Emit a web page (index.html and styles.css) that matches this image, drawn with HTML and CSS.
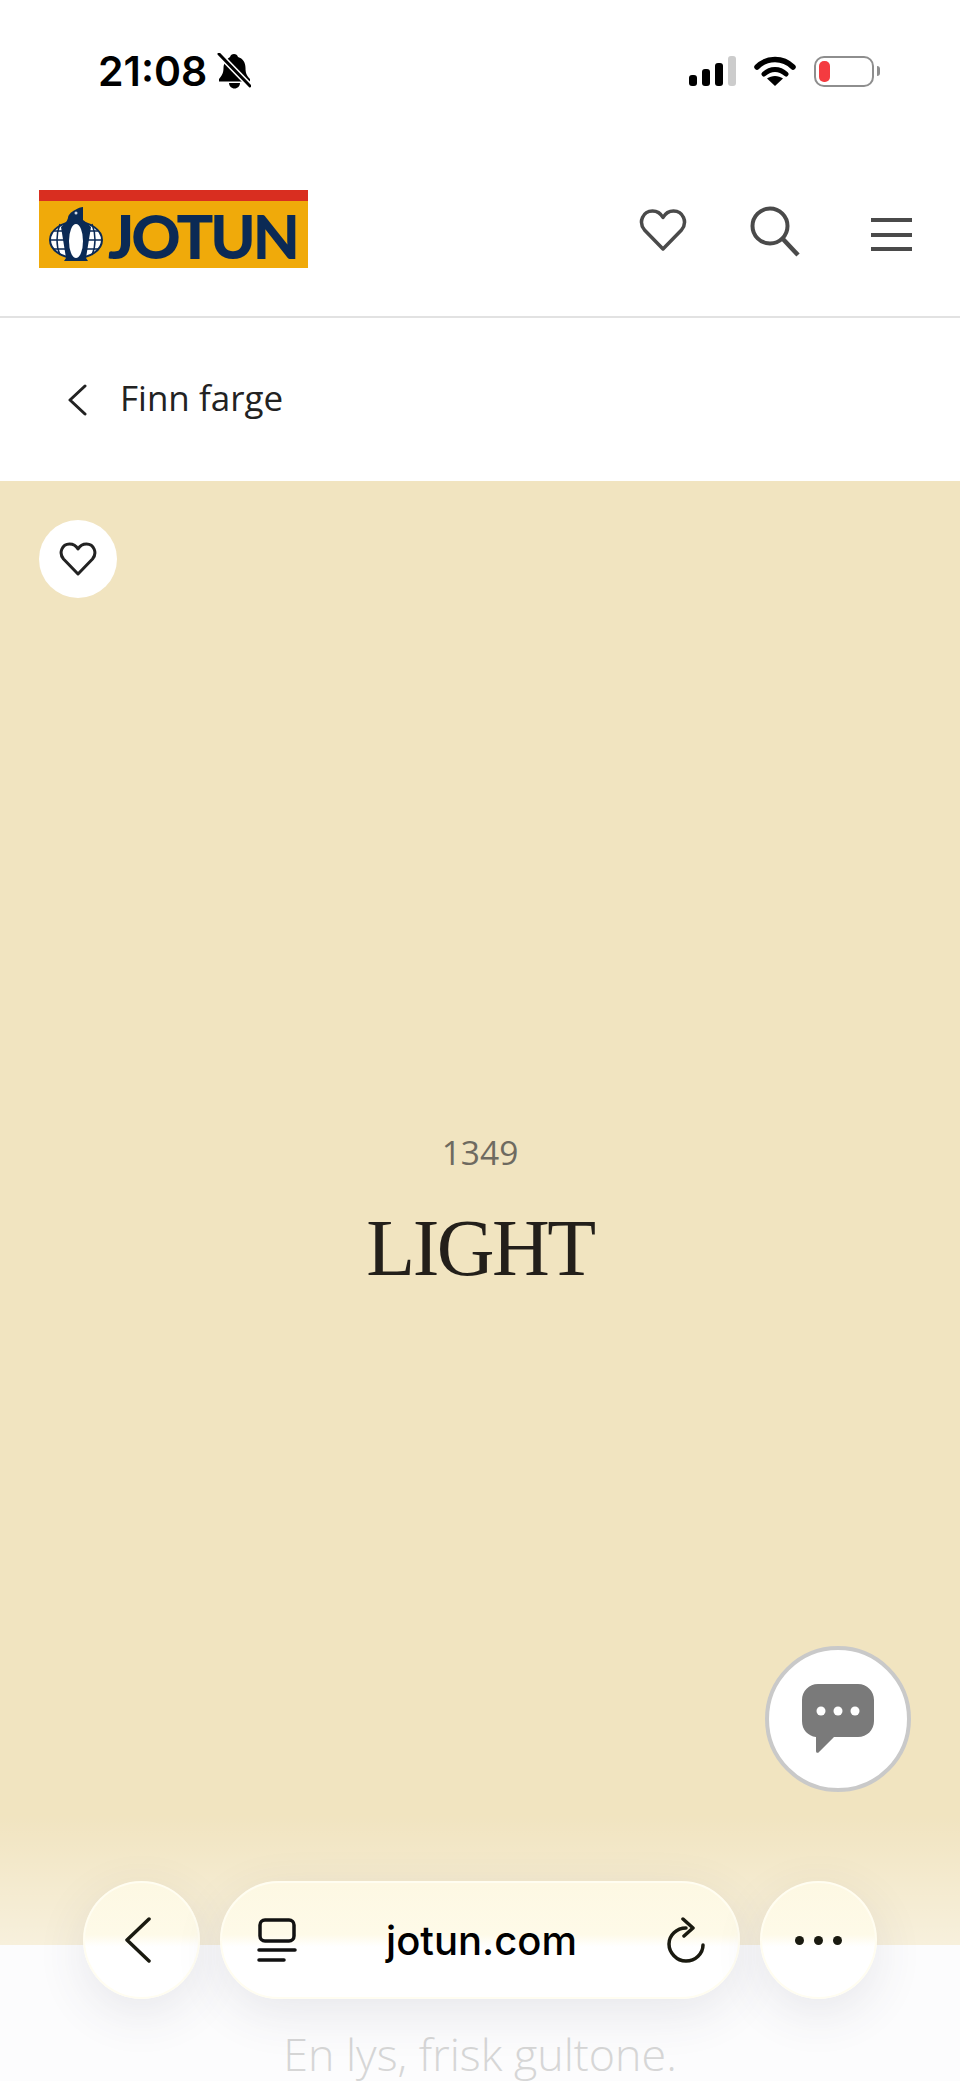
FILE: index.html
```html
<!DOCTYPE html>
<html lang="no">
<head>
  <meta charset="UTF-8">
  <title>1349 Light - Jotun</title>
  <link rel="stylesheet" href="styles.css">
</head>
<body>
<div class="page">

  <div class="statusbar">
    <div class="status-left">
      <span class="time">21:08</span>
      <svg class="bell" width="34" height="36" viewBox="0 0 34 36">
        <path d="M17 1c2 0 3.500 1.200 4 3 5 1.500 7.500 5.500 7.500 11 0 5 1 7.500 4.500 11v2.500H2V26c3-3.500 4.500-6 4.500-11 0-5.500 4-9.500 6.500-11 .5-1.800 2-3 4-3z" fill="#000"/>
        <path d="M12 30h11c0 3-2.500 5.500-5.500 5.500S12 33 12 30z" fill="#000"/>
        <path d="M1 0l32 33" stroke="#fff" stroke-width="6"/>
        <path d="M2 1l31 32" stroke="#000" stroke-width="3" stroke-linecap="round"/>
      </svg>
    </div>
    <div class="status-right">
      <div class="signal">
        <i class="bar bar1"></i><i class="bar bar2"></i><i class="bar bar3"></i><i class="bar bar4"></i>
      </div>
      <svg width="42" height="31" viewBox="0 0 42 31">
        <path d="M3 11C13 1 29 1 39 11" fill="none" stroke="#000" stroke-width="5.500" stroke-linecap="round"/>
        <path d="M10 18c6.500-6 15.500-6 22 0" fill="none" stroke="#000" stroke-width="5" stroke-linecap="round"/>
        <path d="M21 30l-8-7.500c4.500-3.500 11.500-3.500 16 0z" fill="#000"/>
      </svg>
      <div class="battery"><i class="battery-level"></i></div>
    </div>
  </div>

  <header class="site-header">
    <div class="logo">
      <div class="logo-band"></div>
      <div class="logo-body">
        <svg width="54" height="54" viewBox="0 0 54 54">
          <ellipse cx="27" cy="33" rx="26" ry="18" fill="#fff" stroke="#0b2a55" stroke-width="2"/>
          <path d="M2 33h50M5 24h44M5 42h44" stroke="#0b2a55" stroke-width="1.500"/>
          <path d="M11 17c-4 10-4 22 0 31M43 17c4 10 4 22 0 31" fill="none" stroke="#0b2a55" stroke-width="1.500"/>
          <path d="M26 3c3-2 6-3 8-3v13c3 2 5 4 8 7l-5 31 2 3H15l2-3-5-31c3-3 6-5 7-9 0-3 3-6 7-8z" fill="#0b2a55"/>
          <ellipse cx="27" cy="34" rx="7" ry="17" fill="#fff"/>
          <circle cx="27" cy="6" r="1.500" fill="#cfd8e6"/>
        </svg>
        <span class="logo-text">JOTUN</span>
      </div>
    </div>
    <nav class="header-icons">
      <svg class="icon-heart" width="48" height="44" viewBox="0 0 48 44">
        <path d="M24 41L5.500 22C-1 14 4 3 13.500 3c4.500 0 8 2 10.500 6.500C26.500 5 30 3 34.500 3 44 3 49 14 42.500 22z" fill="none" stroke="#4a4a4a" stroke-width="3.500" stroke-linejoin="round"/>
      </svg>
      <svg class="icon-search" width="52" height="52" viewBox="0 0 52 52">
        <circle cx="21" cy="20" r="17.500" fill="none" stroke="#4a4a4a" stroke-width="4"/>
        <path d="M33 32l16 17" stroke="#4a4a4a" stroke-width="4.500"/>
      </svg>
      <div class="burger"><i></i><i></i><i></i></div>
    </nav>
  </header>

  <div class="crumb">
    <svg width="20" height="32" viewBox="0 0 20 32">
      <path d="M18 2L3 16l15 14" fill="none" stroke="#222" stroke-width="3" stroke-linecap="round" stroke-linejoin="round"/>
    </svg>
    <span class="crumb-text">Finn farge</span>
  </div>

  <section class="swatch">
    <button class="fav">
      <svg width="38" height="34" viewBox="0 0 38 34">
        <path d="M19 32L4.500 17C-.5 11 3 2 10.500 2c3.500 0 6.500 1.500 8.500 5 2-3.500 5-5 8.500-5C35 2 38.500 11 33.500 17z" fill="none" stroke="#222" stroke-width="3" stroke-linejoin="round"/>
      </svg>
    </button>
    <div class="color-code">1349</div>
    <h1 class="color-name">LIGHT</h1>
    <button class="chat">
      <svg width="74" height="72" viewBox="0 0 74 72">
        <path d="M17 1h40c9 0 16 7 16 16v21c0 9-7 16-16 16H33L18 69c-1 1.500-3 1-3-1V54C7 53 1 47 1 38V17C1 8 8 1 17 1z" fill="#7a7a7a"/>
        <circle cx="20" cy="28" r="4.500" fill="#fff"/>
        <circle cx="37" cy="28" r="4.500" fill="#fff"/>
        <circle cx="54" cy="28" r="4.500" fill="#fff"/>
      </svg>
    </button>
    <div class="swatch-fade"></div>
  </section>

  <section class="description">
    <p class="desc-text">En lys, frisk gultone.</p>
  </section>

  <div class="browser-bar">
    <button class="bar-round back-btn">
      <svg width="28" height="46" viewBox="0 0 28 46">
        <path d="M25 2L3 23l22 21" fill="none" stroke="#1a1a10" stroke-width="3.500" stroke-linecap="round" stroke-linejoin="round"/>
      </svg>
    </button>
    <div class="bar-pill">
      <svg width="40" height="46" viewBox="0 0 40 46">
        <rect x="3" y="3" width="34" height="21" rx="5" fill="none" stroke="#111" stroke-width="3.500"/>
        <path d="M2 33h36M2 43h25" stroke="#111" stroke-width="3.500" stroke-linecap="round"/>
      </svg>
      <span class="bar-url">jotun.com</span>
      <svg width="40" height="46" viewBox="0 0 40 46">
        <path d="M20 11C10.500 11 3 18.500 3 27s7.500 17 17 17 17-7.500 17-16" fill="none" stroke="#1a1a10" stroke-width="3.500" stroke-linecap="round"/>
        <path d="M17 2l10 9-9 8" fill="none" stroke="#1a1a10" stroke-width="3.500" stroke-linecap="round" stroke-linejoin="round"/>
      </svg>
    </div>
    <button class="bar-round">
      <i class="dot"></i><i class="dot"></i><i class="dot"></i>
    </button>
  </div>

</div>
</body>
</html>
```

FILE: styles.css
```css
html, body {
  margin: 0;
  padding: 0;
  background: #fff;
}
.page {
  position: relative;
  width: 960px;
  height: 2081px;
  overflow: hidden;
  font-family: "Open Sans", sans-serif;
}
button {
  border: none;
  padding: 0;
}
svg {
  display: block;
}

/* status bar */
.statusbar {
  display: flex;
  justify-content: space-between;
  align-items: center;
  box-sizing: border-box;
  height: 190px;
  padding: 0 86px 48px 98px;
}
.status-left {
  display: flex;
  align-items: center;
  gap: 10px;
}
.time {
  font-family: Inter, sans-serif;
  font-weight: 600;
  font-size: 41px;
  line-height: 44px;
  color: #000;
}
.status-right {
  display: flex;
  align-items: center;
  gap: 18px;
}
.signal {
  display: flex;
  align-items: flex-end;
  gap: 5px;
  height: 30px;
}
.bar {
  display: block;
  width: 8px;
  border-radius: 3px;
  background: #000;
}
.bar1 { height: 11px; }
.bar2 { height: 17px; }
.bar3 { height: 23px; }
.bar4 { height: 30px; background: #ccc; }
.battery {
  position: relative;
  width: 60px;
  height: 31px;
  box-sizing: border-box;
  border: 2.5px solid #8e8e8e;
  border-radius: 10px;
  padding: 3px;
}
.battery::after {
  content: "";
  position: absolute;
  right: -8px;
  top: 8px;
  width: 3px;
  height: 10px;
  background: #8e8e8e;
  border-radius: 0 3px 3px 0;
}
.battery-level {
  display: block;
  width: 11px;
  height: 100%;
  background: #f43b40;
  border-radius: 5px;
}

/* header */
.site-header {
  display: flex;
  justify-content: space-between;
  align-items: flex-start;
  height: 126px;
  padding: 0 48px 0 39px;
  border-bottom: 2px solid #e2e2e2;
}
.logo {
  width: 269px;
  height: 78px;
  background: #f0aa0a;
}
.logo-band {
  height: 11px;
  background: #d92e20;
}
.logo-body {
  display: flex;
  align-items: flex-start;
  gap: 5px;
  padding: 6px 0 0 10px;
}
.logo-text {
  font-family: Lato, sans-serif;
  font-weight: 900;
  font-size: 61px;
  line-height: 58px;
  letter-spacing: -3px;
  color: #0b2a55;
}
.header-icons {
  display: flex;
  align-items: flex-start;
  padding-top: 16px;
}
.icon-heart {
  margin-top: 2px;
  margin-right: 62px;
}
.icon-search {
  margin-right: 70px;
}
.burger {
  display: flex;
  flex-direction: column;
  gap: 10.500px;
  width: 41px;
  margin-top: 12px;
}
.burger i {
  display: block;
  height: 4px;
  background: #4a4a4a;
}

/* back link */
.crumb {
  display: flex;
  align-items: center;
  gap: 33px;
  height: 163px;
  padding-left: 67px;
}
.crumb-text {
  margin-top: -5px;
  font-size: 35px;
  color: #222;
}

/* colour area */
.swatch {
  position: relative;
  display: flex;
  flex-direction: column;
  align-items: center;
  justify-content: center;
  height: 1464px;
  background: #f1e4c0;
}
.fav {
  position: absolute;
  left: 39px;
  top: 39px;
  display: flex;
  align-items: center;
  justify-content: center;
  width: 78px;
  height: 78px;
  border-radius: 50%;
  background: #fff;
}
.color-code {
  font-size: 33.500px;
  line-height: 44px;
  color: #6e6a60;
}
.color-name {
  margin: 26px 0 0;
  font-family: "Liberation Serif", serif;
  font-weight: 400;
  font-size: 80px;
  line-height: 96px;
  letter-spacing: -2.500px;
  color: #231f1a;
}
.chat {
  position: absolute;
  left: 765px;
  top: 1165px;
  display: flex;
  align-items: center;
  justify-content: center;
  box-sizing: border-box;
  width: 146px;
  height: 146px;
  border: 4px solid #c9c9c9;
  border-radius: 50%;
  background: #fff;
}
.swatch-fade {
  position: absolute;
  left: 0;
  right: 0;
  bottom: 0;
  height: 130px;
  background: linear-gradient(rgba(255, 255, 255, 0), rgba(255, 255, 255, 0.45));
}

/* text under the colour */
.description {
  height: 136px;
  background: #fcfcfd;
}
.desc-text {
  margin: 0;
  padding-top: 80px;
  text-align: center;
  font-weight: 300;
  font-size: 44.800px;
  line-height: 58px;
  color: #d6d6d6;
}

/* browser toolbar */
.browser-bar {
  position: absolute;
  left: 83px;
  top: 1881px;
  display: flex;
  gap: 20px;
}
.bar-round, .bar-pill {
  box-sizing: border-box;
  height: 118px;
  border: 2px solid #fffdf1;
  background: linear-gradient(#fdf8e3 0%, #fefae8 45%, #fff 56%);
  box-shadow: 0 14px 50px rgba(60, 60, 90, 0.11);
}
.bar-round {
  display: flex;
  align-items: center;
  justify-content: center;
  gap: 10px;
  width: 117px;
  border-radius: 50%;
}
.back-btn svg {
  margin-left: -8px;
}
.bar-pill {
  display: flex;
  align-items: center;
  justify-content: space-between;
  width: 520px;
  padding: 0 32px 0 35px;
  border-radius: 59px;
}
.bar-url {
  font-family: Inter, sans-serif;
  font-weight: 500;
  font-size: 40px;
  color: #000;
}
.dot {
  display: block;
  width: 9px;
  height: 9px;
  border-radius: 50%;
  background: #1a1a10;
}
```
